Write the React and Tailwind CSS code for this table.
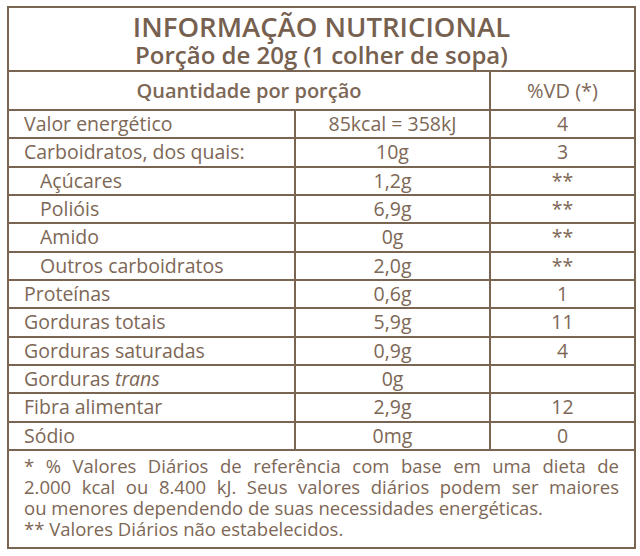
const rows = [
  { name: "Valor energético", qty: "85kcal = 358kJ", vd: "4" },
  { name: "Carboidratos, dos quais:", qty: "10g", vd: "3" },
  { name: "Açúcares", qty: "1,2g", vd: "**", sub: true },
  { name: "Polióis", qty: "6,9g", vd: "**", sub: true },
  { name: "Amido", qty: "0g", vd: "**", sub: true },
  { name: "Outros carboidratos", qty: "2,0g", vd: "**", sub: true },
  { name: "Proteínas", qty: "0,6g", vd: "1" },
  { name: "Gorduras totais", qty: "5,9g", vd: "11" },
  { name: "Gorduras saturadas", qty: "0,9g", vd: "4" },
  { name: "Gorduras", italic: "trans", qty: "0g", vd: "" },
  { name: "Fibra alimentar", qty: "2,9g", vd: "12" },
  { name: "Sódio", qty: "0mg", vd: "0" },
];

export default function App() {
  return (
    <div className="w-[640px] h-[556px] bg-white pt-[6px] pl-[7px] font-['Open_Sans',sans-serif] text-[#7d6756]">
      <div className="w-[629px] border-2 border-[#7a6452]">
        {/* cabeçalho */}
        <div className="h-[64px] border-b-2 border-[#7a6452] flex flex-col items-center pt-[4px]">
          <h1 className="text-[27.5px] leading-[30px] font-semibold text-[#76604f]">
            INFORMAÇÃO NUTRICIONAL
          </h1>
          <p className="text-[24px] leading-[26px] font-semibold text-[#76604f]">
            Porção de 20g (1 colher de sopa)
          </p>
        </div>

        <div className="h-[39px] flex border-b-2 border-[#7a6452]">
          <div className="w-[482px] border-r-2 border-[#7a6452] flex items-center justify-center text-[20px] font-semibold">
            Quantidade por porção
          </div>
          <div className="flex-1 flex items-center justify-center text-[20px]">%VD (*)</div>
        </div>

        {/* linhas */}
        {rows.map((r) => (
          <div key={r.name + r.qty} className="h-[28.33px] flex border-b-2 border-[#7a6452] text-[19.5px] leading-[26px]">
            <div className={`w-[287px] border-r-2 border-[#7a6452] whitespace-nowrap ${r.sub ? "pl-[31px]" : "pl-[15px]"}`}>
              {r.name}
              {r.italic && <i> {r.italic}</i>}
            </div>
            <div className="w-[195px] border-r-2 border-[#7a6452] text-center">{r.qty}</div>
            <div className="flex-1 text-center">{r.vd}</div>
          </div>
        ))}

        {/* rodapé */}
        <div className="h-[96px] px-[15px] pt-[4px] text-[18.5px] leading-[21px] whitespace-nowrap">
          <span className="block text-justify [text-align-last:justify]">
            * % Valores Diários de referência com base em uma dieta de
          </span>
          <span className="block text-justify [text-align-last:justify]">
            2.000 kcal ou 8.400 kJ. Seus valores diários podem ser maiores
          </span>
          <span className="block">ou menores dependendo de suas necessidades energéticas.</span>
          <span className="block">** Valores Diários não estabelecidos.</span>
        </div>
      </div>
    </div>
  );
}
